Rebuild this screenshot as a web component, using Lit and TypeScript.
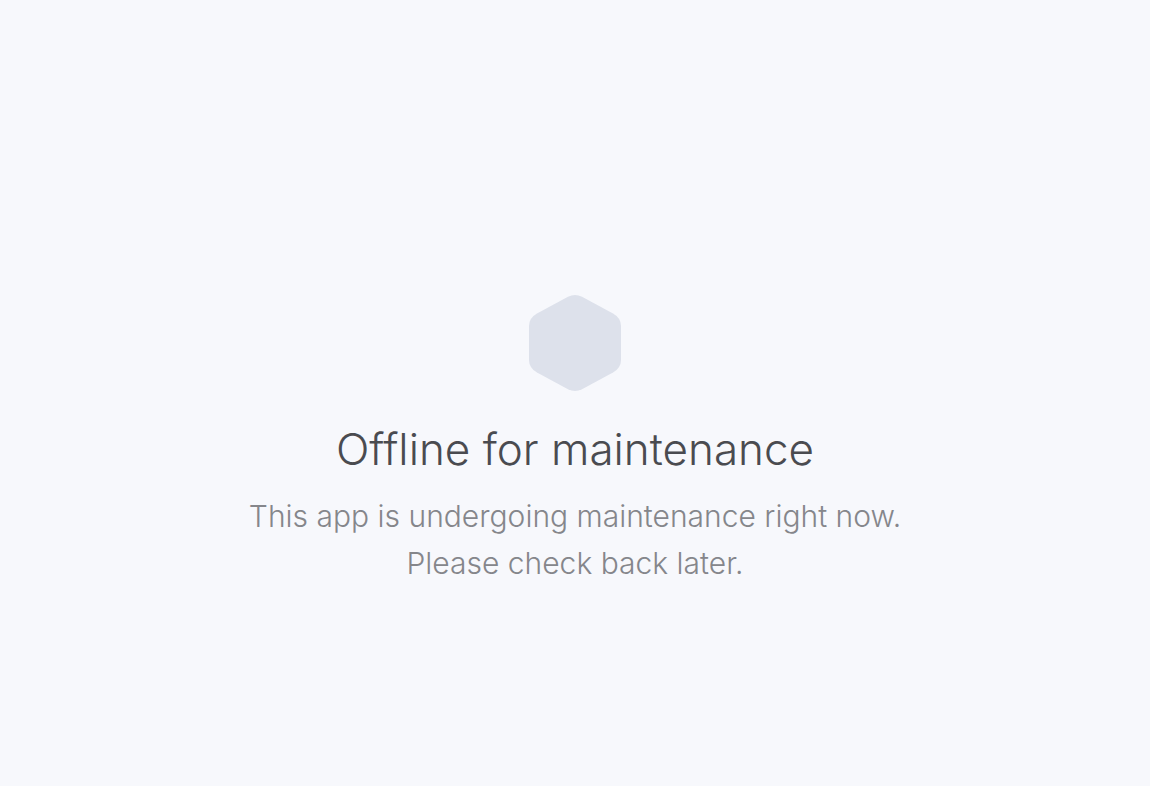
import { LitElement, html, css } from "lit";
import { customElement } from "lit/decorators.js";

@customElement("app-root")
export class AppRoot extends LitElement {
  static styles = css`
    :host {
      display: block;
      background: #f7f8fc;
      font-family: Inter, "Open Sans", sans-serif;
      font-weight: 340;
    }
    .page {
      box-sizing: border-box;
      min-height: 100vh;
      padding: 96px 24px 0;
      display: flex;
      flex-direction: column;
      align-items: center;
      justify-content: center;
      text-align: center;
    }
    .mark {
      display: block;
      width: 92px;
      height: 96px;
      fill: #dde1eb;
    }
    .title {
      margin: 26px 0 0;
      font-size: 44px;
      line-height: 64px;
      font-weight: 340;
      color: #4a4b50;
    }
    .note {
      max-width: 700px;
      margin: 12px 0 0;
      font-size: 30px;
      line-height: 47px;
      color: #85868b;
    }
  `;

  render() {
    return html`
      <main class="page">
        <svg class="mark" viewBox="0 0 92 96" aria-hidden="true">
          <path
            d="M39 1.7Q46 -1.700 53 1.7L84 18.500Q92 23 92 31V65Q92 73 84 77.500L53 94.300Q46 97.700 39 94.300L8 77.500Q0 73 0 65V31Q0 23 8 18.500Z"
          />
        </svg>
        <h1 class="title">Offline for maintenance</h1>
        <p class="note">
          This app is undergoing maintenance right now.<br />Please check back
          later.
        </p>
      </main>
    `;
  }
}
